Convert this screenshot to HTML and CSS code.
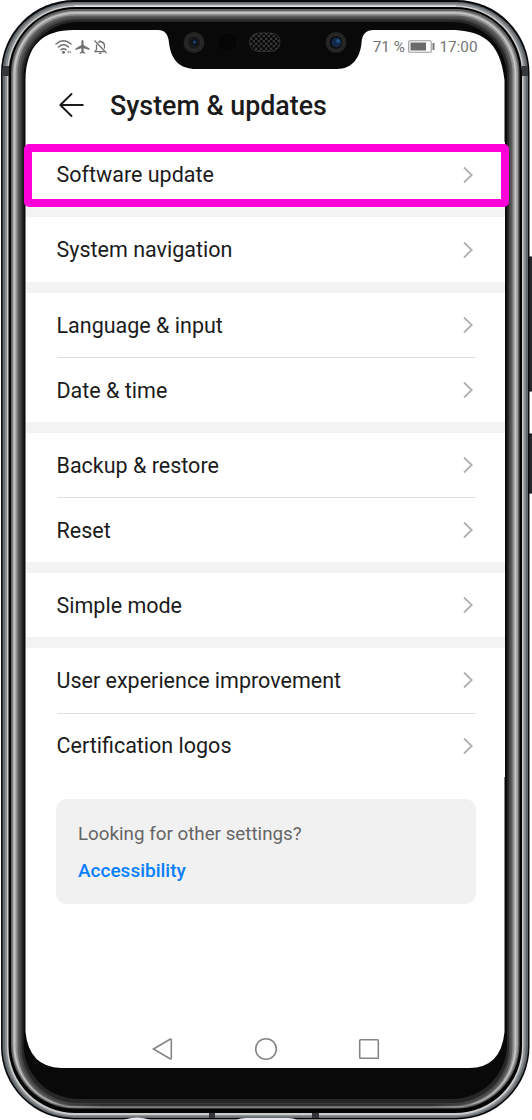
FILE: index.html
```html
<!DOCTYPE html>
<html lang="en">
<head>
<meta charset="utf-8">
<title>System &amp; updates</title>
<link rel="stylesheet" href="styles.css">
</head>
<body>
<div class="phone">
  <svg class="frame" viewBox="0 0 532 1120" aria-hidden="true">
    <defs>
      <linearGradient id="fade" x1="0" x2="1" y1="0" y2="0">
        <stop offset="0" stop-color="#303030" stop-opacity="0"/><stop offset=".12" stop-color="#303030"/><stop offset=".88" stop-color="#303030"/><stop offset="1" stop-color="#303030" stop-opacity="0"/>
      </linearGradient>
      <pattern id="mesh" width="5" height="5" patternUnits="userSpaceOnUse"><rect width="5" height="5" fill="#383838"/><circle cx="1.200" cy="1.200" r="1.600" fill="#080808"/><circle cx="3.700" cy="3.700" r="1.600" fill="#080808"/></pattern>
    </defs>
    <!-- power and volume keys -->
    <rect x="526" y="257" width="8" height="134" rx="2" fill="#26292b" stroke="#050505"/>
    <rect x="526" y="434" width="8" height="59" rx="2" fill="#26292b" stroke="#050505"/>
    <!-- metal rim, outermost ring first -->
    <rect x="1" y="0" width="528.500" height="1119.500" rx="73" fill="#080a0b"/>
    <rect x="2.500" y="2" width="525.500" height="1116" rx="72" fill="#646b6e"/>
    <rect x="5" y="3.500" width="520.500" height="1113" rx="70" fill="#8c9092"/>
    <rect x="7" y="5.500" width="516.500" height="1109.500" rx="68" fill="#cacccc"/>
    <rect x="8.500" y="7" width="513.500" height="1106" rx="67" fill="#040404"/>
    <rect x="11" y="9" width="508.500" height="1099.500" rx="64" fill="#626262"/>
    <rect x="12.500" y="11" width="505.500" height="1096.500" rx="63" fill="#9a9a9a"/>
    <rect x="13.500" y="12" width="503" height="1095" rx="62" fill="#c4c4c4"/>
    <rect x="15.500" y="13.800" width="499" height="1092.700" rx="60" fill="#929292"/>
    <rect x="17.500" y="15.500" width="495" height="1090.500" rx="58" fill="#5c5c5c"/>
    <rect x="19.500" y="17.500" width="491" height="1087.500" rx="57" fill="#454545"/>
    <rect x="21.500" y="19.500" width="487.500" height="1083.500" rx="56" fill="#272727"/>
    <rect x="23.500" y="22" width="483.500" height="1077" rx="55" fill="#090909"/>
    <path d="M50 1103.500H480V1106.500H50Z" fill="url(#fade)"/>
    <path d="M74 5.500H456V7H74Z" fill="#e4e7e6"/>
    <!-- antenna bands and connector -->
    <path d="M3 66H9V76H2.500ZM522 66H528V76H522Z" fill="#34383a"/>
    <path d="M209 1113H215V1118H209ZM312 1113H319V1118H312Z" fill="#34343a"/>
    <path d="M123 1120Q137 1115 151 1120ZM236 1120Q240 1118 246 1118H288Q294 1118 297 1120Z" fill="#e9e8f0"/>
    <!-- display -->
    <path class="display" d="M25.500 80C26 45 43 30 74 30H158Q168 30 169 43C171 60 180 69 196 69H337C352 69 360 58 361.500 43Q362 30 374 30H449C481 30 500 40 504.500 80V1032Q501 1068 469 1068H61Q29 1067 25.500 1032Z"/>
    <!-- cameras, sensor and earpiece -->
    <circle cx="194" cy="42.500" r="10.500" fill="#242424"/><circle cx="194" cy="42.500" r="7" fill="#1a1a1a" stroke="#303030"/><circle cx="194.500" cy="42" r="3.800" fill="#0c141c"/><circle cx="194.500" cy="42" r="1.600" fill="#194773"/>
    <circle cx="227.500" cy="42" r="10" fill="#060606" stroke="#0e0e0e"/>
    <rect x="249.500" y="33" width="30.500" height="18.500" rx="9" fill="url(#mesh)" stroke="#303030"/>
    <circle cx="336" cy="42.500" r="10.500" fill="#242424"/><circle cx="336" cy="42.500" r="7" fill="#0b0b0e" stroke="#303030"/><circle cx="336.500" cy="42.500" r="5" fill="#142a49"/><circle cx="338" cy="41" r="1.800" fill="#23588f"/>
  </svg>

  <main class="screen">
    <div class="status">
      <svg class="status-left" viewBox="0 0 54 16" aria-hidden="true">
        <g fill="none" stroke="#707070" stroke-width="1.500" stroke-linecap="round">
          <path d="M1 5Q8.500-1.500 16 5M3.500 8Q8.500 3.500 13.500 8M6 10.700Q8.500 8.800 11 10.700"/>
        </g>
        <circle cx="8.500" cy="13.200" r="1.500" fill="#707070"/>
        <path d="M13.800 11.500V14.500L12 13ZM14.700 11.500V14.500L16.500 13Z" fill="#888"/>
        <path d="M27.500 1Q28.600 1 28.600 2.500V6L34.500 9.500V11L28.600 9.300V12.500L30.300 13.700V14.700L27.500 14L24.700 14.700V13.700L26.400 12.500V9.300L20.500 11V9.500L26.400 6V2.500Q26.400 1 27.500 1Z" fill="#707070"/>
        <path d="M39.500 1.500L51.500 14M41.500 5.500V10.500L40 12.700H49M43 3.500L45 2.500V1.200M45 2.500Q49.500 3 49.500 7V9.500M44 14.300H46.500" fill="none" stroke="#707070" stroke-width="1.300"/>
      </svg>
      <div class="status-right">
        <span class="charge">71 %</span>
        <svg class="battery" viewBox="0 0 27 13" aria-hidden="true">
          <rect x=".7" y=".7" width="22.500" height="11.600" rx="1" fill="#fff" stroke="#999" stroke-width="1.100"/>
          <path d="M2.500 2.500H18V10.500H2.500Z" fill="#6b6b6b"/><path d="M24.500 3H26.500V10H24.500Z" fill="#777"/>
        </svg>
        <span class="clock">17:00</span>
      </div>
    </div>
    <header class="header">
      <svg class="back" viewBox="0 0 26 26" aria-hidden="true"><path d="M13.500 2L2.300 13L13.500 24M2.300 13H24.800" fill="none" stroke="#1a1a1a" stroke-width="1.900" stroke-linecap="round" stroke-linejoin="round"/></svg>
      <h1 class="title">System &amp; updates</h1>
    </header>

    <div class="groups">
      <section class="group"><div class="row highlighted"><span>Software update</span><svg class="chevron" viewBox="0 0 12 18"><path d="M2 1.500L9.700 9L2 16.500"/></svg></div></section>
      <section class="group"><div class="row"><span>System navigation</span><svg class="chevron" viewBox="0 0 12 18"><path d="M2 1.500L9.700 9L2 16.500"/></svg></div></section>
      <section class="group">
        <div class="row"><span>Language &amp; input</span><svg class="chevron" viewBox="0 0 12 18"><path d="M2 1.500L9.700 9L2 16.500"/></svg></div>
        <div class="row"><span>Date &amp; time</span><svg class="chevron" viewBox="0 0 12 18"><path d="M2 1.500L9.700 9L2 16.500"/></svg></div>
      </section>
      <section class="group">
        <div class="row"><span>Backup &amp; restore</span><svg class="chevron" viewBox="0 0 12 18"><path d="M2 1.500L9.700 9L2 16.500"/></svg></div>
        <div class="row"><span>Reset</span><svg class="chevron" viewBox="0 0 12 18"><path d="M2 1.500L9.700 9L2 16.500"/></svg></div>
      </section>
      <section class="group"><div class="row"><span>Simple mode</span><svg class="chevron" viewBox="0 0 12 18"><path d="M2 1.500L9.700 9L2 16.500"/></svg></div></section>
      <section class="group">
        <div class="row"><span>User experience improvement</span><svg class="chevron" viewBox="0 0 12 18"><path d="M2 1.500L9.700 9L2 16.500"/></svg></div>
        <div class="row"><span>Certification logos</span><svg class="chevron" viewBox="0 0 12 18"><path d="M2 1.500L9.700 9L2 16.500"/></svg></div>
      </section>
    </div>

    <aside class="card">
      <p class="card-text">Looking for other settings?</p>
      <a class="card-link">Accessibility</a>
    </aside>

    <nav class="nav">
      <svg viewBox="0 0 24 24"><path d="M2.500 12L19 2.300Q20.300 1.700 20.300 3V21Q20.300 22.300 19 21.700Z"/></svg>
      <svg viewBox="0 0 24 24"><circle cx="12" cy="12" r="10.300"/></svg>
      <svg viewBox="0 0 24 24"><rect x="2.700" y="2.700" width="18.600" height="18.600" rx=".8"/></svg>
    </nav>
  </main>
</div>
</body>
</html>
```

FILE: styles.css
```css
*, *::after { box-sizing: border-box; }
body { margin: 0; background: #fff; font-family: Roboto, sans-serif; color: #1b1b1b; }
.phone { position: relative; width: 532px; height: 1120px; overflow: hidden; }
.frame { position: absolute; inset: 0; width: 532px; height: 1120px; }
.display { fill: #fff; }
.screen { position: relative; display: flex; flex-direction: column; width: 479px; height: 1038px; margin: 30px 0 0 25.5px; }
.status { display: flex; justify-content: space-between; align-items: center; height: 33px; padding: 0 27px 0 29px; }
.status-left { width: 54px; height: 16px; }
.status-right { display: flex; align-items: center; color: #747474; font-size: 15.3px; }
.battery { width: 27px; height: 13px; margin: 0 4px 0 3.5px; }
.header { display: flex; align-items: center; height: 79.2px; padding: 4px 32px 0 32.5px; }
.back { width: 26px; height: 26px; }
.title { margin: 2px 0 0 26px; font-size: 26.8px; font-weight: 500; line-height: 32px; white-space: nowrap; }
.groups { display: flex; flex-direction: column; gap: 10.6px; background: #f3f3f3; }
.group { background: #fff; }
.row { position: relative; display: flex; align-items: center; justify-content: space-between; height: 64.7px; margin: 0 28.5px 0 31px; font-size: 21.5px; white-space: nowrap; }
.row + .row { border-top: 1px solid #dedede; }
.chevron { width: 12px; height: 18px; margin-right: 2px; fill: none; stroke: #b0b0b0; stroke-width: 1.8; }
.highlighted::after { content: ""; position: absolute; left: -32.5px; right: -33px; top: 2px; height: 63px; border: 8px solid #ff00d8; border-radius: 5px; }
.card { margin: 21.5px 28.5px 0 30.5px; height: 105px; padding: 22px; border-radius: 11px; background: #f1f1f1; }
.card-text { margin: 0; font-size: 18.8px; line-height: 26px; color: #666; }
.card-link { display: block; margin-top: 11px; font-size: 19px; font-weight: 500; line-height: 26px; color: #087fff; }
.nav { display: flex; justify-content: space-between; width: 230px; margin: auto 0 7px 125.5px; }
.nav svg { width: 24px; height: 24px; fill: none; stroke: #858585; stroke-width: 1.6; }
```
